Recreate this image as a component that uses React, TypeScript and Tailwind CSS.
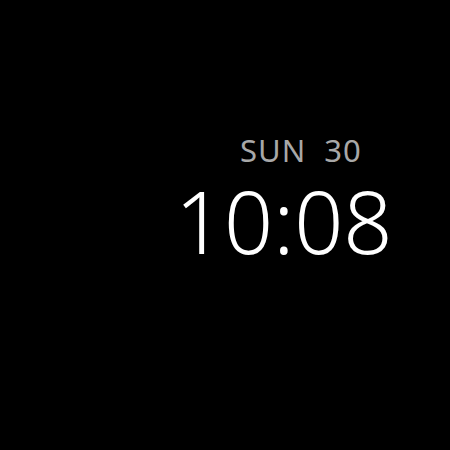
import React from 'react';

export default function App() {
  return (
    <div className="w-[450px] h-[450px] bg-black overflow-hidden" style={{ fontFamily: '"Noto Sans", "Open Sans", sans-serif' }}>
      <div className="flex flex-col pt-[132px] pl-[175px]">
        <div className="ml-[65px] text-[31px] leading-[36px] text-[#a8a8a8] tracking-[1px]">SUN&nbsp;&nbsp;30</div>
        <div className="mt-[10px] text-[86px] leading-[86px] font-light text-white">10:08</div>
      </div>
    </div>
  );
}
